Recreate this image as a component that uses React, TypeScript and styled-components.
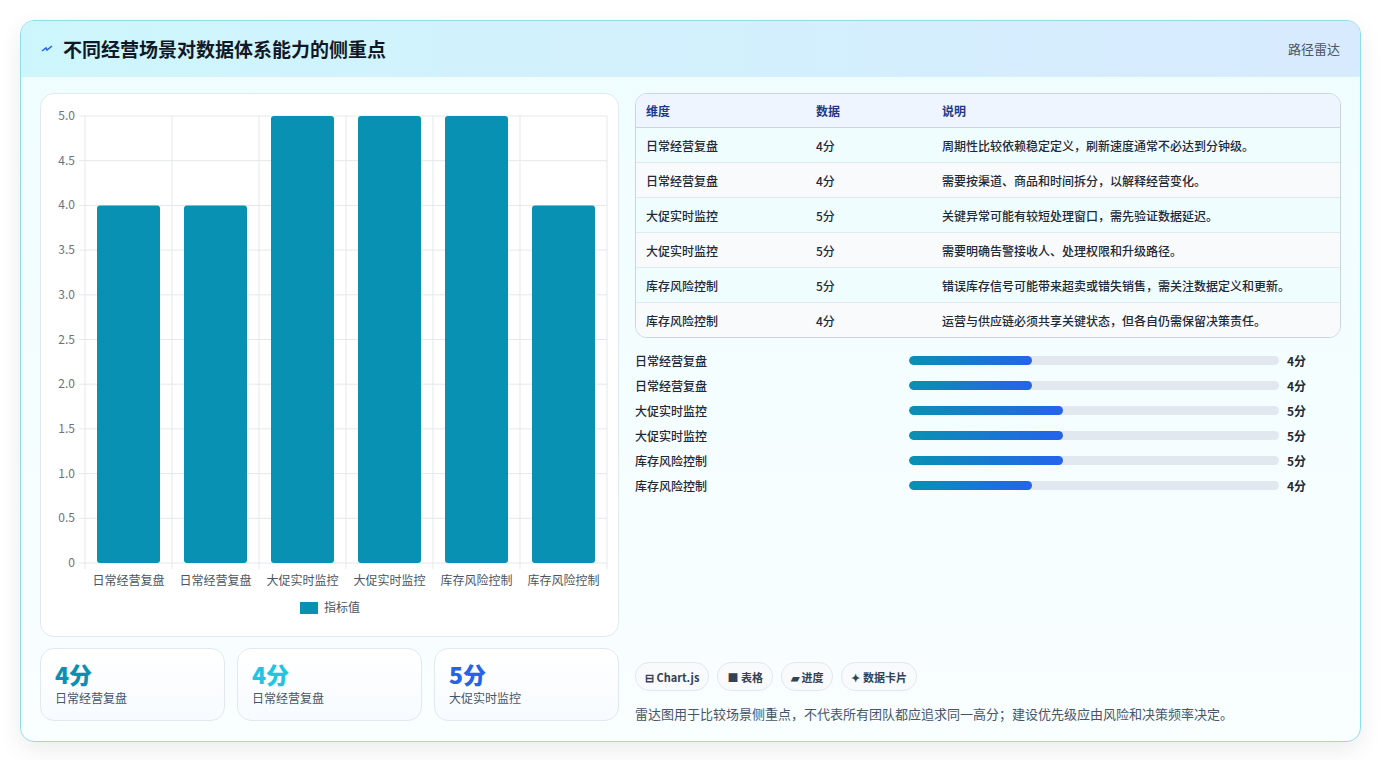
import * as React from 'react';
import styled, { createGlobalStyle } from 'styled-components';

const GlobalStyle = createGlobalStyle`
    body {
        margin: 0;
        background: #f3f4f6;
        font-family: "Noto Sans CJK SC", "Noto Sans", sans-serif;
        color: #1f2937;
    }
`;

const rows = [
    { name: '日常经营复盘', score: 4, note: '周期性比较依赖稳定定义，刷新速度通常不必达到分钟级。' },
    { name: '日常经营复盘', score: 4, note: '需要按渠道、商品和时间拆分，以解释经营变化。' },
    { name: '大促实时监控', score: 5, note: '关键异常可能有较短处理窗口，需先验证数据延迟。' },
    { name: '大促实时监控', score: 5, note: '需要明确告警接收人、处理权限和升级路径。' },
    { name: '库存风险控制', score: 5, note: '错误库存信号可能带来超卖或错失销售，需关注数据定义和更新。' },
    { name: '库存风险控制', score: 4, note: '运营与供应链必须共享关键状态，但各自仍需保留决策责任。' },
];

const Page = styled.div`
    padding: 20px;
    background: #fff;
    height: 760px;
    box-sizing: border-box;
`;

const Card = styled.div`
    border: 1px solid #8fdde6;
    border-radius: 14px;
    overflow: hidden;
    background: linear-gradient(180deg, #effdff 0%, #f9feff 100%);
    box-shadow: 0 8px 24px rgba(0, 0, 0, 0.08);
    height: 720px;
    display: flex;
    flex-direction: column;
`;

const Header = styled.div`
    height: 55px;
    flex-shrink: 0;
    display: flex;
    align-items: center;
    justify-content: space-between;
    padding: 0 20px 0 20px;
    background: linear-gradient(90deg, #cdf6fc 0%, #d8eafe 100%);
    border-bottom: 1px solid #d6f0f5;
`;

const Title = styled.h1`
    margin: 0;
    font-size: 19px;
    font-weight: 700;
    color: #111827;
    display: flex;
    align-items: center;
    gap: 10px;
`;

const Tag = styled.span`
    font-size: 13px;
    color: #4b5563;
`;

const Body = styled.div`
    flex: 1;
    display: grid;
    grid-template-columns: 579px 1fr;
    gap: 16px;
    padding: 16px 19px 18px 19px;
`;

const Col = styled.div`
    display: flex;
    flex-direction: column;
    gap: 11px;
`;

const ChartBox = styled.div`
    background: #fff;
    border: 1px solid #e2e8f0;
    border-radius: 14px;
    height: 544px;
    box-sizing: border-box;
`;

const Stats = styled.div`
    display: grid;
    grid-template-columns: repeat(3, 1fr);
    gap: 12px;
`;

const Stat = styled.div`
    height: 73px;
    box-sizing: border-box;
    border: 1px solid #e2e8f0;
    border-radius: 14px;
    background: linear-gradient(180deg, #fff 0%, #f7fbff 100%);
    padding: 10px 14px;
`;

const StatValue = styled.div<{ $c: string }>`
    font-size: 23px;
    font-weight: 800;
    line-height: 30px;
    color: ${p => p.$c};
`;

const StatLabel = styled.div`
    font-size: 12px;
    color: #475569;
`;

const Right = styled.div`
    display: flex;
    flex-direction: column;
`;

const Table = styled.table`
    width: 100%;
    border-collapse: separate;
    border-spacing: 0;
    border: 1px solid #cbd5e1;
    border-radius: 12px;
    overflow: hidden;
    font-size: 12px;
    th {
        text-align: left;
        font-weight: 600;
        color: #1e3a8a;
        background: #eef5ff;
        height: 33px;
        padding: 0 10px;
        border-bottom: 1px solid #cbd5e1;
    }
    td {
        height: 34px;
        padding: 0 10px;
        color: #1f2937;
        font-weight: 500;
        border-bottom: 1px solid #e2e8f0;
    }
    tr:last-child td { border-bottom: 0; }
    tbody tr:nth-child(odd) td { background: #effdff; }
    tbody tr:nth-child(even) td { background: #f8fafc; }
`;

const Bars = styled.div`
    margin-top: 10px;
    display: flex;
    flex-direction: column;
`;

const BarRow = styled.div`
    display: grid;
    grid-template-columns: 266px 370px 1fr;
    gap: 8px;
    align-items: center;
    height: 25px;
    font-size: 12px;
    font-weight: 500;
`;

const Track = styled.div`
    height: 9px;
    border-radius: 5px;
    background: #e2e8f0;
    overflow: hidden;
`;

const Fill = styled.div`
    height: 100%;
    border-radius: 5px;
    background: linear-gradient(90deg, #0891b2, #2563eb);
`;

const Score = styled.span`
    font-weight: 700;
`;

const Footer = styled.div`
    margin-top: auto;
`;

const Chips = styled.div`
    display: flex;
    gap: 8px;
`;

const Chip = styled.span`
    height: 27px;
    padding: 0 9px;
    display: inline-flex;
    align-items: center;
    gap: 4px;
    border: 1px solid #e2e8f0;
    border-radius: 14px;
    background: #f8fafc;
    font-size: 11px;
    font-weight: 600;
    color: #334155;
`;

const Note = styled.p`
    margin: 13px 0 0;
    font-size: 13px;
    color: #475569;
`;

const Chart = () => {
    const x0 = 44, x1 = 566, y0 = 22, y1 = 469;
    const cw = (x1 - x0) / 6;
    const yv = (v: number) => y1 - (v / 5) * (y1 - y0);
    const ticks = [0, 0.5, 1, 1.5, 2, 2.5, 3, 3.5, 4, 4.5, 5];
    return (
        <svg width="577" height="542" style={{ display: 'block' }} fontFamily='"Noto Sans CJK SC", sans-serif'>
            {ticks.map(t => (
                <g key={t}>
                    <line x1={x0 - 6} x2={x1} y1={yv(t)} y2={yv(t)} stroke="#e5e7eb" />
                    <text x={x0 - 10} y={yv(t) + 4} fontSize="12" fill="#6b7280" textAnchor="end">{t === 0 ? '0' : t.toFixed(1)}</text>
                </g>
            ))}
            {Array.from({ length: 7 }).map((_, i) => (
                <line key={i} x1={x0 + i * cw} x2={x0 + i * cw} y1={y0} y2={y1 + 6} stroke="#e5e7eb" />
            ))}
            {rows.map((r, i) => (
                <g key={i}>
                    <rect x={x0 + i * cw + 12} y={yv(r.score)} width={cw - 24} height={y1 - yv(r.score)} rx="3" fill="#0891b2" />
                    <text x={x0 + i * cw + cw / 2} y={y1 + 22} fontSize="12" fill="#4b5563" textAnchor="middle">{r.name}</text>
                </g>
            ))}
            <rect x="259" y="508" width="18" height="12" fill="#0891b2" />
            <text x="283" y="518" fontSize="12" fill="#4b5563">指标值</text>
        </svg>
    );
};

export default function App() {
    return (
        <>
            <GlobalStyle />
            <Page>
                <Card>
                    <Header>
                        <Title>
                            <svg width="12" height="12" viewBox="0 0 12 12"><path d="M1 8 L5 5 L6 7 L11 3" stroke="#2563eb" strokeWidth="1.5" fill="none" /></svg>
                            不同经营场景对数据体系能力的侧重点
                        </Title>
                        <Tag>路径雷达</Tag>
                    </Header>
                    <Body>
                        <Col>
                            <ChartBox><Chart /></ChartBox>
                            <Stats>
                                <Stat><StatValue $c="#0891b2">4分</StatValue><StatLabel>日常经营复盘</StatLabel></Stat>
                                <Stat><StatValue $c="#22c5e0">4分</StatValue><StatLabel>日常经营复盘</StatLabel></Stat>
                                <Stat><StatValue $c="#2563eb">5分</StatValue><StatLabel>大促实时监控</StatLabel></Stat>
                            </Stats>
                        </Col>
                        <Right>
                            <Table>
                                <thead>
                                    <tr><th style={{ width: 150 }}>维度</th><th style={{ width: 106 }}>数据</th><th>说明</th></tr>
                                </thead>
                                <tbody>
                                    {rows.map((r, i) => (
                                        <tr key={i}><td>{r.name}</td><td>{r.score}分</td><td>{r.note}</td></tr>
                                    ))}
                                </tbody>
                            </Table>
                            <Bars>
                                {rows.map((r, i) => (
                                    <BarRow key={i}>
                                        <span>{r.name}</span>
                                        <Track><Fill style={{ width: `${(r.score / 12) * 100}%` }} /></Track>
                                        <Score>{r.score}分</Score>
                                    </BarRow>
                                ))}
                            </Bars>
                            <Footer>
                                <Chips>
                                    <Chip>⊟ Chart.js</Chip>
                                    <Chip>■ 表格</Chip>
                                    <Chip>▰ 进度</Chip>
                                    <Chip>✦ 数据卡片</Chip>
                                </Chips>
                                <Note>雷达图用于比较场景侧重点，不代表所有团队都应追求同一高分；建设优先级应由风险和决策频率决定。</Note>
                            </Footer>
                        </Right>
                    </Body>
                </Card>
            </Page>
        </>
    );
}
